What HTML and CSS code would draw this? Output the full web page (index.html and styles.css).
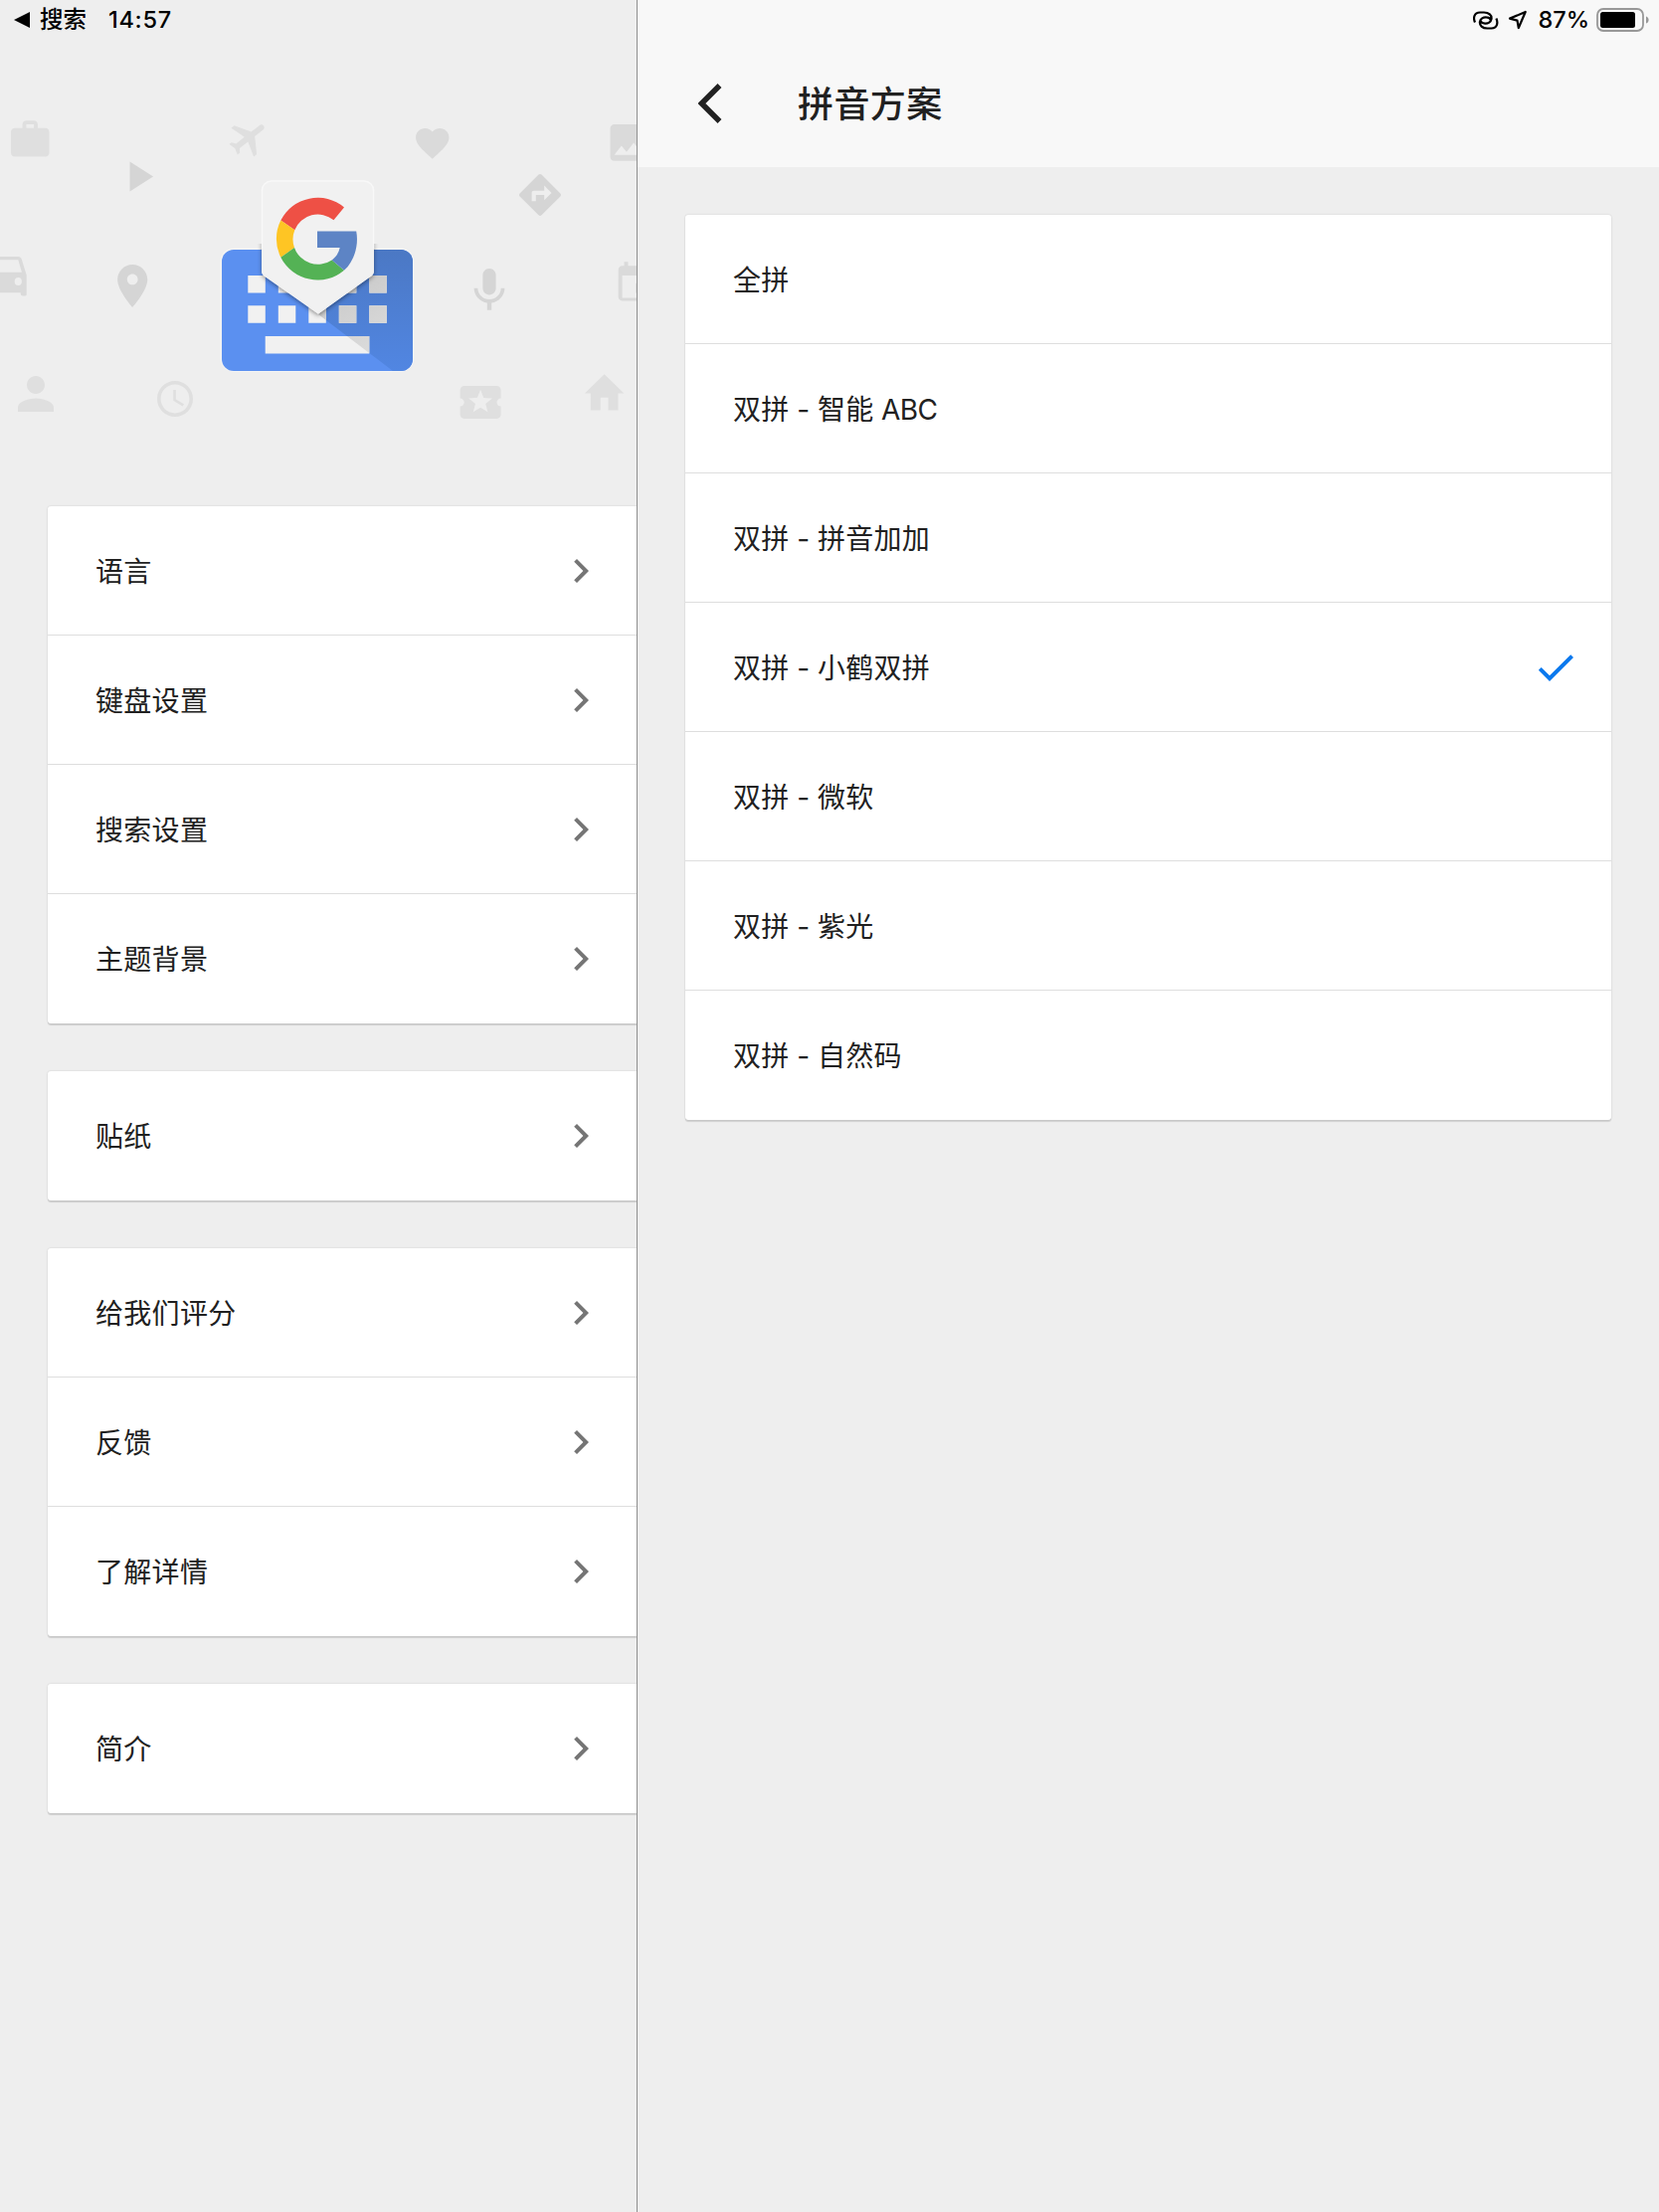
FILE: index.html
```html
<!DOCTYPE html>
<html lang="zh-CN">
<head>
<meta charset="utf-8">
<title>拼音方案</title>
<link rel="stylesheet" href="styles.css">
</head>
<body>
<svg class="symbols" width="0" height="0" aria-hidden="true">
  <symbol id="chevron" viewBox="0 0 24 24"><path d="M10 6L8.59 7.41 13.17 12l-4.58 4.59L10 18l6-6z"/></symbol>
</svg>
<div class="app">
  <aside class="sidebar">
    <div class="status status-left">
      <svg class="back-app" viewBox="0 0 16 16" width="16" height="16"><path d="M0 8L16 0v16z"/></svg>
      <span class="app-name">搜索</span>
      <span class="time">14:57</span>
    </div>
    <svg class="hero" viewBox="0 40 640 469" width="640" height="469">
      <defs>
        <linearGradient id="shade" x1="0" y1="0" x2="0" y2="1">
          <stop offset="0" stop-color="#4b78c4"/><stop offset="1" stop-color="#5186e2"/>
        </linearGradient>
        <linearGradient id="keyShade" gradientUnits="userSpaceOnUse" x1="320" y1="270" x2="370" y2="360">
          <stop offset="0" stop-color="#c4c4c4"/><stop offset="1" stop-color="#dcdcdc"/>
        </linearGradient>
        <clipPath id="shadowArea"><path d="M376 250H415V373H395L320 316V273H376z"/></clipPath>
        <filter id="drop" x="-20%" y="-20%" width="140%" height="140%">
          <feDropShadow dx="0" dy="2" stdDeviation="2.2" flood-color="#000" flood-opacity=".38"/>
        </filter>
        <clipPath id="belowTop"><path d="M200 245H440V400H200z"/></clipPath>
      </defs>
      <g fill="#dfdfdf">
        <path transform="translate(7.2 117.3) scale(1.92)" d="M20 6h-4V4c0-1.110-.89-2-2-2h-4c-1.110 0-2 .89-2 2v2H4c-1.110 0-2 .89-2 2v11c0 1.110.89 2 2 2h16c1.110 0 2-.89 2-2V8c0-1.110-.89-2-2-2zm-6 0h-4V4h4v2z"/>
        <path transform="translate(250.300 138) rotate(52) scale(1.93) translate(-11.5 -11.7)" d="M21 16v-2l-8-5V3.500c0-.83-.67-1.500-1.500-1.500S10 2.670 10 3.500V9l-8 5v2l8-2.500V19l-2 1.500V22l3.500-1 3.500 1v-1.500L13 19v-5.500l8 2.500z"/>
        <path transform="translate(9 369) scale(2.250)" d="M12 12c2.210 0 4-1.790 4-4s-1.790-4-4-4-4 1.790-4 4 1.790 4 4 4zm0 2c-2.670 0-8 1.340-8 4v2h16v-2c0-2.660-5.330-4-8-4z"/>
        <path transform="translate(154.4 379.4) scale(1.8)" d="M12 2C6.480 2 2 6.480 2 12s4.480 10 10 10 10-4.480 10-10S17.520 2 12 2zm0 18c-4.420 0-8-3.580-8-8s3.580-8 8-8 8 3.580 8 8-3.580 8-8 8zm.5-13H11v6l5.250 3.150.75-1.230-4.500-2.670z"/>
        <path transform="translate(458.500 379.900) scale(2.050)" d="M20 12c0-1.100.9-2 2-2V6c0-1.100-.9-2-2-2H4c-1.100 0-1.990.9-1.990 2v4c1.100 0 1.990.9 1.990 2s-.89 2-2 2v4c0 1.100.9 2 2 2h16c1.100 0 2-.9 2-2v-4c-1.100 0-2-.9-2-2zm-4.420 4.800L12 14.500l-3.580 2.300 1.080-4.120-3.290-2.690 4.240-.25L12 5.800l1.540 3.950 4.240.25-3.290 2.690 1.090 4.110z"/>
        <path transform="translate(584 370) scale(1.970 2.120)" d="M10 20v-6h4v6h5v-8h3L12 3 2 12h3v8z"/>
      </g>
      <g fill="#dadada">
        <path transform="translate(414.700 124) scale(1.670)" d="M12 21.350l-1.450-1.320C5.400 15.360 2 12.280 2 8.500 2 5.420 4.420 3 7.500 3c1.740 0 3.410.81 4.500 2.090C13.090 3.810 14.760 3 16.500 3 19.580 3 22 5.420 22 8.500c0 3.780-3.400 6.860-8.550 11.540L12 21.350z"/>
        <path transform="translate(607.4 118.8) scale(2.050)" d="M21 19V5c0-1.100-.9-2-2-2H5c-1.100 0-2 .9-2 2v14c0 1.100.9 2 2 2h14c1.100 0 2-.9 2-2zM8.500 13.500l2.500 3.010L14.500 12l4.500 6H5l3.500-4.500z"/>
        <path transform="translate(-23.700 244.700) scale(2.400 2.640)" d="M18.920 6.010C18.720 5.420 18.160 5 17.500 5h-11c-.66 0-1.210.42-1.420 1.010L3 12v8c0 .55.45 1 1 1h1v-2.200h13.500V19c0 .7.300 1 .9 1h.6c.6 0 1-.1 1-.5V12l-2.080-5.990zM6.500 16a1.500 1.500 0 110-3 1.500 1.500 0 010 3zm11 0a1.500 1.500 0 110-3 1.500 1.500 0 010 3zM5 11l1.500-4.700h11L19 11H5z"/>
        <path transform="translate(615.8 261.3) scale(1.960)" d="M17 12h-5v5h5v-5zM16 1v2H8V1H6v2H5c-1.110 0-1.990.9-1.990 2L3 19c0 1.100.89 2 2 2h14c1.100 0 2-.9 2-2V5c0-1.100-.9-2-2-2h-1V1h-2zm3 18.500H5V8h14v11.500z"/>
      </g>
      <g fill="#d5d5d5">
        <path transform="translate(113.400 151.8) scale(2.140)" d="M8 5v14l11-7z"/>
        <path transform="translate(517.8 170.8) scale(2.100)" d="M21.710 11.290l-9-9c-.39-.39-1.020-.39-1.410 0l-9 9c-.39.39-.39 1.020 0 1.410l9 9c.39.39 1.020.39 1.410 0l9-9c.39-.38.39-1.010 0-1.410zM14 14.500V12h-4v3H8v-4c0-.55.45-1 1-1h5V7.500l3.500 3.500-3.500 3.500z"/>
        <path transform="translate(107.400 261.6) scale(2.150)" d="M12 2C8.130 2 5 5.130 5 9c0 5.250 7 13 7 13s7-7.750 7-13c0-3.870-3.130-7-7-7zm0 9.500c-1.380 0-2.500-1.120-2.500-2.500s1.120-2.500 2.500-2.500 2.500 1.120 2.500 2.500-1.120 2.500-2.500 2.500z"/>
        <path transform="translate(465.6 265.6) scale(2.200)" d="M12 14c1.660 0 2.990-1.340 2.990-3L15 5c0-1.660-1.340-3-3-3S9 3.340 9 5v6c0 1.660 1.340 3 3 3zm5.300-3c0 3-2.540 5.100-5.300 5.100S6.700 14 6.700 11H5c0 3.410 2.720 6.230 6 6.720V21h2v-3.280c3.280-.48 6-3.300 6-6.720h-1.700z"/>
      </g>
      <rect x="221.500" y="249.500" width="195" height="124.500" rx="14" fill="#f4f4f4"/>
      <rect x="223" y="251" width="192" height="122" rx="12" fill="#5b90f0"/>
      <g clip-path="url(#shadowArea)"><rect x="223" y="251" width="192" height="122" rx="12" fill="url(#shade)"/></g>
      <g fill="#f1f1f1">
        <path d="M249.300 277h17.500v17.500h-17.500zM279.800 277h17.500v17.500h-17.500zM340.800 277h17.500v17.500h-17.500zM371.300 277h17.500v17.500h-17.500zM249.300 307.300h17.500v17.500h-17.500zM279.800 307.300h17.500v17.500h-17.500zM310.300 307.300h17.500v17.500h-17.500zM340.800 307.300h17.500v17.500h-17.500zM371.300 307.300h17.500v17.500h-17.500zM266.700 338h104.600v17.500H266.700z"/>
      </g>
      <g clip-path="url(#shadowArea)" fill="url(#keyShade)">
        <path d="M340.800 277h17.500v17.500h-17.500zM371.300 277h17.500v17.500h-17.500zM310.300 307.300h17.500v17.500h-17.500zM340.800 307.300h17.500v17.500h-17.500zM371.300 307.300h17.500v17.500h-17.500zM266.700 338h104.600v17.500H266.700z"/>
      </g>
      <g clip-path="url(#belowTop)"><path filter="url(#drop)" d="M273 181.500H366a10 10 0 0110 10V272a7 7 0 01-3.500 6L320 315.500 266.500 278a7 7 0 01-3.500-6V191.500a10 10 0 0110-10z" fill="#f1f1f1"/></g>
      <path d="M273 181.500H366a10 10 0 0110 10V272a7 7 0 01-3.500 6L320 315.500 266.500 278a7 7 0 01-3.500-6V191.500a10 10 0 0110-10z" fill="#f1f1f1"/>
      <path d="M263.500 250V191.500a9.500 9.500 0 019.500-9.500H366a9.500 9.500 0 019.500 9.500V250" fill="none" stroke="#f8f8f8" stroke-width="1.500"/>
      <path d="M346 208.500A41.600 41.600 0 00282.300 221.500L296.300 231.300A25 25 0 01335.500 221.300z" fill="#ee5045"/>
      <path d="M282.300 221.500A41.600 41.600 0 00282.300 258.800L296 249A25 25 0 01296.300 231.300z" fill="#fec524"/>
      <path d="M282.300 258.800A41.600 41.600 0 00346 271.800L333.700 261.400A25 25 0 01296 249z" fill="#54b255"/>
      <path d="M319 232.400H358.200C361 247 356 263 346 271.800L333.700 261.400C338 258.500 340.500 254 341.700 249H319z" fill="#5d84c5"/>
    </svg>
    <nav class="groups">
      <div class="card">
        <a class="row"><span>语言</span><svg class="icon"><use href="#chevron"/></svg></a>
        <a class="row"><span>键盘设置</span><svg class="icon"><use href="#chevron"/></svg></a>
        <a class="row"><span>搜索设置</span><svg class="icon"><use href="#chevron"/></svg></a>
        <a class="row"><span>主题背景</span><svg class="icon"><use href="#chevron"/></svg></a>
      </div>
      <div class="card">
        <a class="row"><span>贴纸</span><svg class="icon"><use href="#chevron"/></svg></a>
      </div>
      <div class="card">
        <a class="row"><span>给我们评分</span><svg class="icon"><use href="#chevron"/></svg></a>
        <a class="row"><span>反馈</span><svg class="icon"><use href="#chevron"/></svg></a>
        <a class="row"><span>了解详情</span><svg class="icon"><use href="#chevron"/></svg></a>
      </div>
      <div class="card">
        <a class="row"><span>简介</span><svg class="icon"><use href="#chevron"/></svg></a>
      </div>
    </nav>
  </aside>
  <main class="detail">
    <header class="topbar">
      <div class="status status-right">
        <svg class="link-icon" viewBox="0 0 26 19" width="26" height="19"><path d="M2 11.500C0 7 1 1.600 7 1.500H11C16 1.500 19 4.500 18.500 8 18 11 15 12.800 12 12.600 9.500 12.500 8 11 7.700 10M23.400 7.500C25.400 12 24.400 17.400 18.400 17.500H14.400C9.400 17.500 6.400 14.500 6.900 11 7.400 8 10.400 6.200 13.400 6.400 15.900 6.500 17.400 8 17.700 9"/></svg>
        <svg class="nav-icon" viewBox="0 0 20 20" width="20" height="20"><path d="M2 8.600L17.700 2 10.800 18 9.500 10.600z"/></svg>
        <span class="percent">87%</span>
        <svg class="battery" viewBox="0 0 54 24" width="54" height="24"><rect x="1" y="1" width="46" height="22" rx="6" fill="none" stroke="#989898" stroke-width="1.800"/><rect x="4" y="4" width="35" height="16" rx="2.500"/><path d="M50 8.500c3.500 1 3.500 6 0 7z" fill="#989898"/></svg>
      </div>
      <div class="titlebar">
        <svg class="back" viewBox="0 0 24 40" width="24" height="40"><path d="M21.500 2L3.500 20l18 18"/></svg>
        <h1>拼音方案</h1>
      </div>
    </header>
    <div class="options">
      <div class="card">
        <div class="row"><span>全拼</span></div>
        <div class="row"><span>双拼 - 智能 <span class="latin">ABC</span></span></div>
        <div class="row"><span>双拼 - 拼音加加</span></div>
        <div class="row"><span>双拼 - 小鹤双拼</span><svg class="icon check" viewBox="0 0 24 24"><path d="M9 16.170L4.830 12l-1.420 1.410L9 19 21 7l-1.410-1.410z"/></svg></div>
        <div class="row"><span>双拼 - 微软</span></div>
        <div class="row"><span>双拼 - 紫光</span></div>
        <div class="row"><span>双拼 - 自然码</span></div>
      </div>
    </div>
  </main>
</div>
</body>
</html>
```
FILE: styles.css
```css
* { box-sizing: border-box; }

body {
  margin: 0;
  background: #eee;
  color: #212121;
  font-family: Inter, "Noto Sans CJK SC", sans-serif;
}

.symbols { display: none; }

.app {
  display: grid;
  grid-template-columns: 641px 1fr;
  height: 2224px;
  overflow: hidden;
}

.sidebar {
  border-right: 1px solid #8f8f8f;
  overflow: hidden;
}

.status {
  display: flex;
  align-items: center;
  height: 40px;
  color: #000;
  font-size: 23px;
  font-weight: 500;
  line-height: 40px;
  white-space: nowrap;
}

.status-left { padding-left: 14px; }
.app-name { margin-left: 10px; font-size: 23.5px; }
.time { margin-left: 22px; font-size: 23.5px; letter-spacing: 0.7px; }

.hero { display: block; }

.groups {
  display: flex;
  flex-direction: column;
  gap: 48px;
  padding-left: 48px;
}

.card {
  background: #fff;
  border-radius: 3px;
  box-shadow: 0 0 2px rgba(0, 0, 0, 0.16), 0 2px 1px rgba(0, 0, 0, 0.12);
}

.sidebar .card { border-radius: 3px 0 0 3px; }

.row {
  display: flex;
  align-items: center;
  justify-content: space-between;
  height: 130px;
  padding: 0 32px 0 48px;
  border-bottom: 1px solid #dedede;
  font-size: 28px;
  letter-spacing: 0.3px;
  line-height: 40px;
  word-spacing: -0.6px;
}

.row > span { padding-top: 2px; }

.row:last-child { border-bottom-color: transparent; }

.latin { letter-spacing: -0.6px; }

.icon {
  width: 48px;
  height: 48px;
  fill: #757575;
}

.check { fill: #0b79ee; }

.topbar {
  height: 168px;
  background: #f8f8f8;
}

.status-right {
  justify-content: flex-end;
  padding-right: 9px;
}

.link-icon, .nav-icon {
  fill: none;
  stroke: #000;
  stroke-width: 2.2;
  stroke-linejoin: round;
}

.link-icon { margin-top: 1px; }
.nav-icon { margin-left: 9px; }
.percent { margin: 0 7px 0 10px; font-size: 23.5px; }

.titlebar {
  display: flex;
  align-items: center;
  height: 128px;
  padding-left: 61px;
}

.back {
  fill: none;
  stroke: #212121;
  stroke-width: 5.5;
}

h1 {
  margin: 2px 0 0 76px;
  font-size: 36px;
  font-weight: 500;
  letter-spacing: 0.4px;
  line-height: 50px;
}

.options { padding: 48px; }
```
